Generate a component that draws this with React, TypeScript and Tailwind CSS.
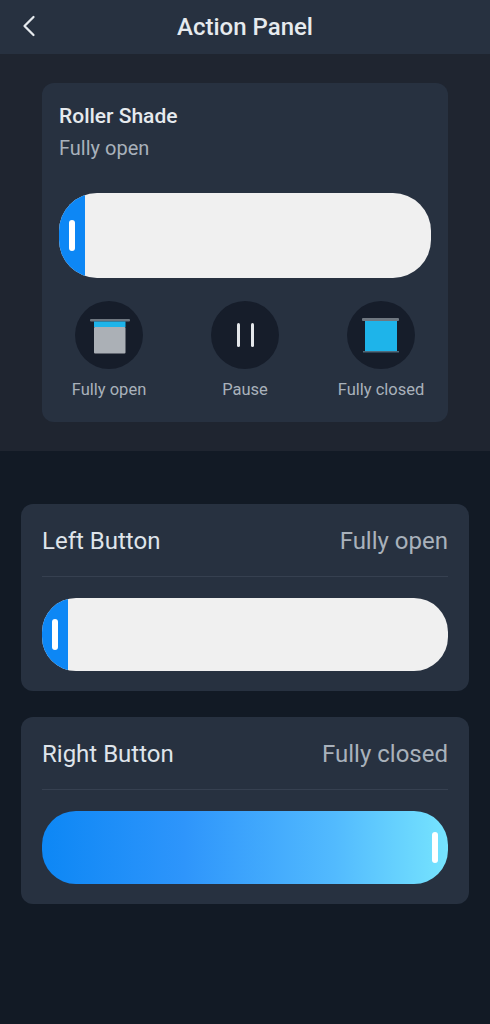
import { ChevronLeft } from "lucide-react";

function Slider({ height, radius }: { height: string; radius: string }) {
  return (
    <div className={`relative w-full overflow-hidden bg-[#f0f0f0] ${height} ${radius}`}>
      <div className="flex h-full w-[26px] items-center justify-end bg-[#0d87f5] pr-[10px]">
        <div className="h-[31px] w-[6px] rounded-full bg-white" />
      </div>
    </div>
  );
}

function OpenIcon() {
  return (
    <svg width="68" height="68" viewBox="0 0 68 68">
      <rect x="15" y="18" width="40" height="2.5" rx="1" fill="#6f7780" />
      <rect x="19" y="20.5" width="31.5" height="5.5" fill="#1eb4ea" />
      <rect x="19" y="26" width="31.5" height="26.5" rx="1" fill="#abb0b6" />
    </svg>
  );
}

function ClosedIcon() {
  return (
    <svg width="68" height="68" viewBox="0 0 68 68">
      <rect x="15" y="17" width="37" height="3" rx="1" fill="#6f7780" />
      <rect x="18" y="20" width="32" height="31" fill="#1eb4ea" />
      <rect x="16" y="50" width="36" height="1.5" fill="#4f6b7c" />
    </svg>
  );
}

function PauseIcon() {
  return (
    <div className="flex gap-[11px]">
      <div className="h-[24px] w-[3px] rounded-full bg-[#e4e7ea]" />
      <div className="h-[24px] w-[3px] rounded-full bg-[#e4e7ea]" />
    </div>
  );
}

function Action({ label, children }: { label: string; children: React.ReactNode }) {
  return (
    <div className="flex w-[100px] flex-col items-center">
      <div className="flex h-[68px] w-[68px] items-center justify-center rounded-full bg-[#161d2a]">
        {children}
      </div>
      <div className="mt-[9px] whitespace-nowrap text-[16.5px] leading-[24px] text-[#a9b1bb]">{label}</div>
    </div>
  );
}

function ButtonCard({ title, value, children }: { title: string; value: string; children: React.ReactNode }) {
  return (
    <div className="h-[187px] rounded-[12px] bg-[#273140] px-[21px]">
      <div className="flex h-[73px] items-center justify-between border-b border-[#364050] pt-[1px]">
        <span className="text-[24px] text-[#dfe4ea]">{title}</span>
        <span className="text-[24px] text-[#a9b1bb]">{value}</span>
      </div>
      <div className="pt-[21px]">{children}</div>
    </div>
  );
}

export default function App() {
  return (
    <div className="min-h-[1024px] w-full bg-[#121a25] font-['Roboto',sans-serif]">
      <header className="relative flex h-[54px] items-center justify-center bg-[#273140]">
        <ChevronLeft className="absolute left-[11px] top-[8px] text-[#e6eaee]" size={36} strokeWidth={1.5} />
        <h1 className="text-[24px] font-medium text-[#e6eaee]">Action Panel</h1>
      </header>

      <section className="h-[397px] bg-[#1f2530] pl-[42px] pt-[29px]">
        <div className="h-[339px] w-[406px] rounded-[12px] bg-[#273140] px-[17px] pt-[18px]">
          <div className="text-[21px] font-medium leading-[30px] text-[#e6eaee]">Roller Shade</div>
          <div className="mt-[3px] text-[20px] leading-[28px] text-[#a9b1bb]">Fully open</div>
          <div className="mt-[31px]">
            <Slider height="h-[85px]" radius="rounded-[38px]" />
          </div>
          <div className="mt-[23px] flex justify-between">
            <Action label="Fully open">
              <OpenIcon />
            </Action>
            <Action label="Pause">
              <PauseIcon />
            </Action>
            <Action label="Fully closed">
              <ClosedIcon />
            </Action>
          </div>
        </div>
      </section>

      <div className="flex flex-col gap-[26px] px-[21px] pt-[53px]">
        <ButtonCard title="Left Button" value="Fully open">
          <Slider height="h-[73px]" radius="rounded-[34px]" />
        </ButtonCard>
        <ButtonCard title="Right Button" value="Fully closed">
          <div className="flex h-[73px] items-center justify-end rounded-[34px] bg-[linear-gradient(90deg,#0d87f5_0%,#2e95fb_35%,#52bafe_72%,#76e4fe_100%)] pr-[10px]">
            <div className="h-[31px] w-[6px] rounded-full bg-white" />
          </div>
        </ButtonCard>
      </div>
    </div>
  );
}
